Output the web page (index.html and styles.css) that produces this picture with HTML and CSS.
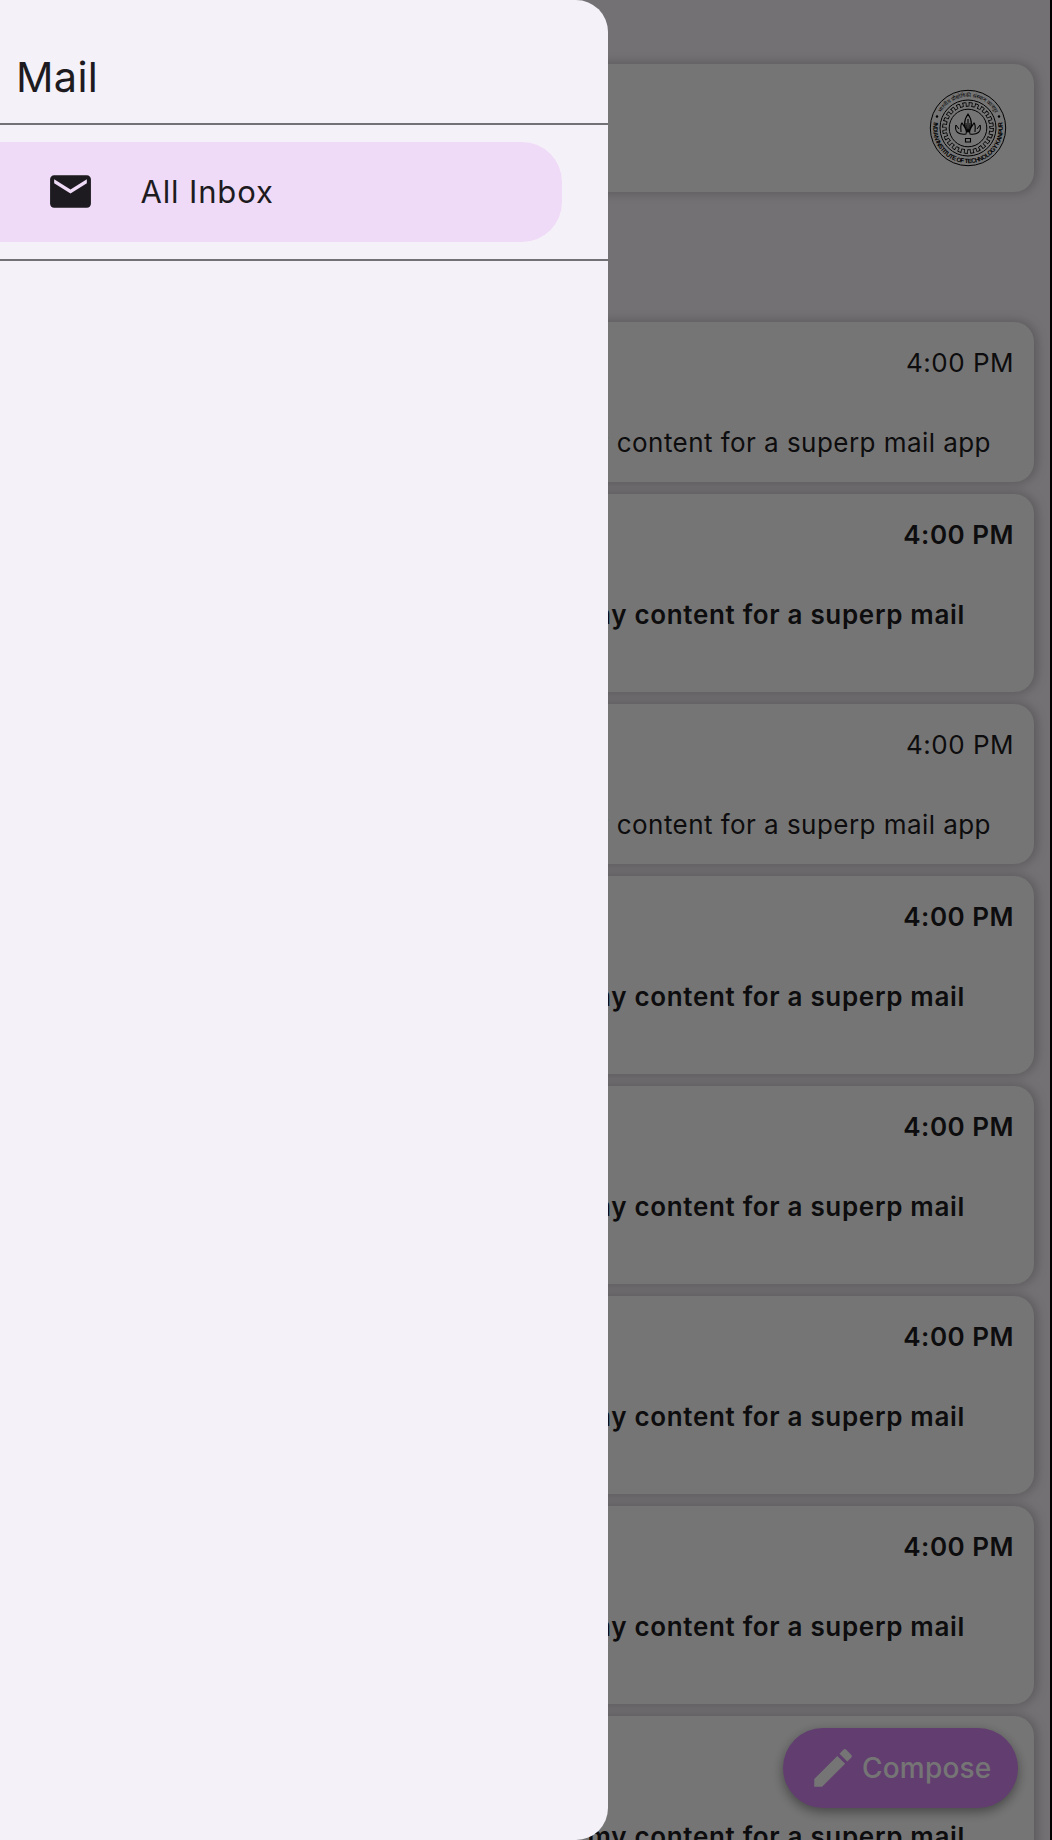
FILE: index.html
```html
<!DOCTYPE html>
<html lang="en">
<head>
<meta charset="utf-8">
<title>Mail</title>
<link rel="stylesheet" href="styles.css">
</head>
<body>
<div class="app">
  <main class="page">
    <header class="search">
      <svg class="seal" viewBox="-40 -40 80 80" width="80" height="80">
        <defs>
          <path id="lower" d="M-34.2 -6A34.8 34.8 0 1 0 34.2 -6"/>
          <path id="upper" d="M-27 -15.2A31 31 0 0 1 27 -15.2"/>
        </defs>
        <g fill="none" stroke="#000">
          <circle r="37.7"/>
          <circle r="28"/>
          <circle r="18.8"/>
          <circle r="25.4" stroke-dasharray="3.325 3.325"/>
          <circle r="21.8" stroke-dasharray="2.853 2.853" stroke-dashoffset="2.853"/>
          <circle r="23.6" stroke-width="4" stroke-dasharray="0.8 2.2893"/>
          <path d="M0 -14C-5 -7-4 0 0 4C4 0 5-7 0-14ZM0 -9V3M-12-3C-14 4-9 7-2 6C0 3-4-2-6-5C-8-3-7 0-7 4M12-3C14 4 9 7 2 6C0 3 4-2 6-5C8-3 7 0 7 4M-2.5 10.5V14H2.5V10.5Z" stroke-width="1.1"/>
          <path d="M-12-3L-9 1M12-3L9 1M-2-5C-2 0 0 3 0 3C0 3 2 0 2-5"/>
        </g>
        <text class="seal-text"><textPath href="#lower" textLength="122">INDIAN INSTITUTE OF TECHNOLOGY KANPUR</textPath></text>
        <text class="seal-hindi"><textPath href="#upper">भारतीय प्रौद्योगिकी संस्थान कानपुर</textPath></text>
        <circle cx="-31" cy="-11.5" r="1.2"/><circle cx="31" cy="-11.5" r="1.2"/>
      </svg>
    </header>
    <section class="list">
      <article class="mail"><time>4:00 PM</time><p>my content for a superp mail app</p></article>
      <article class="mail unread"><time>4:00 PM</time><p>my content for a superp mail</p></article>
      <article class="mail"><time>4:00 PM</time><p>my content for a superp mail app</p></article>
      <article class="mail unread"><time>4:00 PM</time><p>my content for a superp mail</p></article>
      <article class="mail unread"><time>4:00 PM</time><p>my content for a superp mail</p></article>
      <article class="mail unread"><time>4:00 PM</time><p>my content for a superp mail</p></article>
      <article class="mail unread"><time>4:00 PM</time><p>my content for a superp mail</p></article>
      <article class="mail unread"><time></time><p>my content for a superp mail</p></article>
    </section>
  </main>
  <button class="compose">
    <svg viewBox="0 0 24 24" width="50" height="50"><path d="M3 17.25V21h3.75L17.81 9.94l-3.75-3.75L3 17.25zM20.71 7.04a1 1 0 0 0 0-1.41l-2.34-2.34a1 1 0 0 0-1.41 0l-1.83 1.83 3.75 3.75 1.83-1.83z"/></svg>
    <span>Compose</span>
  </button>
  <div class="scrim"></div>
  <nav class="drawer">
    <h1>Mail</h1>
    <div class="section">
      <a class="item">
        <svg viewBox="0 0 24 24" width="49" height="49"><path d="M20 4H4c-1.1 0-1.99.9-1.99 2L2 18c0 1.1.9 2 2 2h16c1.1 0 2-.9 2-2V6c0-1.1-.9-2-2-2zm0 4l-8 5-8-5V6l8 5 8-5v2z"/></svg>
        <span>All Inbox</span>
      </a>
    </div>
  </nav>
</div>
</body>
</html>
```
FILE: styles.css
```css
* { box-sizing: border-box; margin: 0; }
body { font-family: Inter, sans-serif; color: #1d1b20; }
.app { position: relative; width: 1052px; height: 1840px; overflow: hidden; background: #fcf6fc; border-right: 2px solid #000; }
.page { padding: 64px 16px 0; }
.search { display: flex; align-items: center; justify-content: flex-end; height: 128px; padding: 0 26px 1px 0; border-radius: 20px; background: #fff; box-shadow: 2px 0 12px rgba(0, 0, 0, .26); }
.seal-text { font: 700 6.3px "Liberation Sans", sans-serif; }
.seal-hindi { font: 400 5.4px "Noto Sans", sans-serif; }
.list { display: flex; flex-direction: column; gap: 12px; margin-top: 130px; }
.mail { display: flex; flex-direction: column; align-items: flex-end; flex-shrink: 0; height: 160px; padding: 24px 20px 0 0; border-radius: 20px; background: #fff; box-shadow: 2px 0 12px rgba(0, 0, 0, .26); font-size: 26px; line-height: 34px; letter-spacing: .5px; white-space: nowrap; }
.mail time { height: 34px; }
.mail p { margin: 46px 23px 0 0; letter-spacing: .45px; }
.unread { height: 198px; font-weight: 600; }
.unread p { margin-right: 49px; letter-spacing: .68px; }
.compose { position: absolute; left: 783px; top: 1728px; display: flex; align-items: center; gap: 4px; width: 235px; height: 80px; padding: 0 0 0 25px; border: 0; border-radius: 40px; background: #d585f3; color: #fff; font: 500 28px Inter, sans-serif; letter-spacing: .2px; box-shadow: 0 4px 12px rgba(0, 0, 0, .4); }
.compose svg { fill: #fff; }
.scrim { position: absolute; inset: 0 -2px 0 0; background: rgba(0, 0, 0, .54); }
.drawer { position: absolute; left: 0; top: 0; width: 608px; height: 1840px; border-radius: 0 32px 32px 0; background: #f4f1f9; }
.drawer h1 { height: 125px; padding: 52px 0 0 16px; border-bottom: 2px solid #727176; font-size: 41.5px; line-height: 50px; font-weight: 400; letter-spacing: .3px; }
.section { padding: 17px 46px 17px 0; border-bottom: 2px solid #727176; }
.item { display: flex; align-items: center; gap: 46px; height: 100px; padding: 0 0 2px 45.5px; border-radius: 0 40px 40px 0; background: #efdbf7; font-size: 31px; letter-spacing: .85px; }
.item svg { fill: #1d1b20; }
```
